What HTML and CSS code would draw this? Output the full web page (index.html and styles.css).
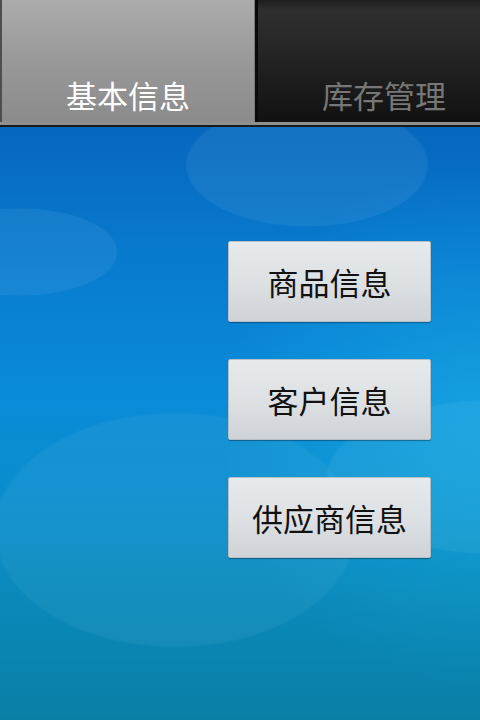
FILE: index.html
```html
<!DOCTYPE html>
<html lang="zh-CN">
<head>
<meta charset="utf-8">
<title>基本信息</title>
<link rel="stylesheet" href="styles.css">
</head>
<body>
<div class="app">
  <div class="tabs">
    <div class="tab tab-active"><span>基本信息</span></div>
    <div class="tab tab-idle"><span>库存管理</span></div>
  </div>
  <div class="tabs-rule"></div>
  <div class="content">
    <button class="btn">商品信息</button>
    <button class="btn">客户信息</button>
    <button class="btn">供应商信息</button>
  </div>
</div>
</body>
</html>
```
FILE: styles.css
```css
html, body {
  margin: 0;
  padding: 0;
  width: 480px;
  height: 720px;
  overflow: hidden;
  font-family: "Noto Sans CJK SC", "Noto Sans", sans-serif;
}
.app {
  width: 480px;
  height: 720px;
  display: flex;
  flex-direction: column;
}
.tabs {
  display: flex;
  height: 122px;
  flex: none;
}
.tab {
  display: flex;
  align-items: flex-end;
  justify-content: center;
  box-sizing: border-box;
  padding-bottom: 7px;
  font-size: 31px;
  line-height: 40px;
}
.tab-active {
  width: 255px;
  border-left: 2px solid #4e4e4e;
  border-right: 1px solid #7a7a7a;
  background: linear-gradient(180deg, #acacac 0%, #9a9a9a 45%, #8b8b8b 100%);
  color: #ffffff;
}
.tab-idle {
  flex: 1;
  padding-left: 30px;
  border-left: 3px solid #0a0a0a;
  background: linear-gradient(180deg, #1e1e1e 0%, #2f2f2f 8%, #262626 40%, #111111 100%);
  color: #777777;
}
.tabs-rule {
  flex: none;
  height: 3px;
  background: #8f8f8f;
  border-bottom: 2px solid #1a1a1a;
}
.content {
  flex: 1;
  display: flex;
  flex-direction: column;
  align-items: flex-end;
  gap: 37px;
  padding: 114px 49px 0 0;
  background:
    radial-gradient(ellipse 122px 62px at 307px 38px, rgba(150, 200, 240, 0.10) 98%, rgba(150, 200, 240, 0) 100%),
    radial-gradient(ellipse 98px 44px at 20px 125px, rgba(150, 200, 240, 0.10) 98%, rgba(150, 200, 240, 0) 100%),
    radial-gradient(ellipse 182px 118px at 175px 403px, rgba(150, 210, 240, 0.08) 98%, rgba(150, 210, 240, 0) 100%),
    radial-gradient(ellipse 175px 78px at 500px 350px, rgba(150, 220, 245, 0.09) 98%, rgba(150, 220, 245, 0) 100%),
    radial-gradient(ellipse 260px 260px at 480px 300px, rgba(40, 200, 240, 0.35) 0%, rgba(40, 200, 240, 0) 100%),
    linear-gradient(180deg, #0667bd 0%, #087dd0 25%, #0a8bd8 45%, #0a8ecb 65%, #0a86b4 85%, #0a7fa6 100%);
}
.btn {
  width: 203px;
  height: 81px;
  box-sizing: border-box;
  border: 1px solid #b9c0c5;
  border-radius: 2px;
  background: linear-gradient(180deg, #e6eaed 0%, #dde1e4 50%, #cfd3d7 100%);
  box-shadow: 0 1px 1px rgba(0, 0, 0, 0.35);
  font-family: "Noto Sans CJK SC", "Noto Sans", sans-serif;
  font-size: 31px;
  color: #111111;
  padding: 0;
  line-height: 40px;
  cursor: pointer;
}
```
